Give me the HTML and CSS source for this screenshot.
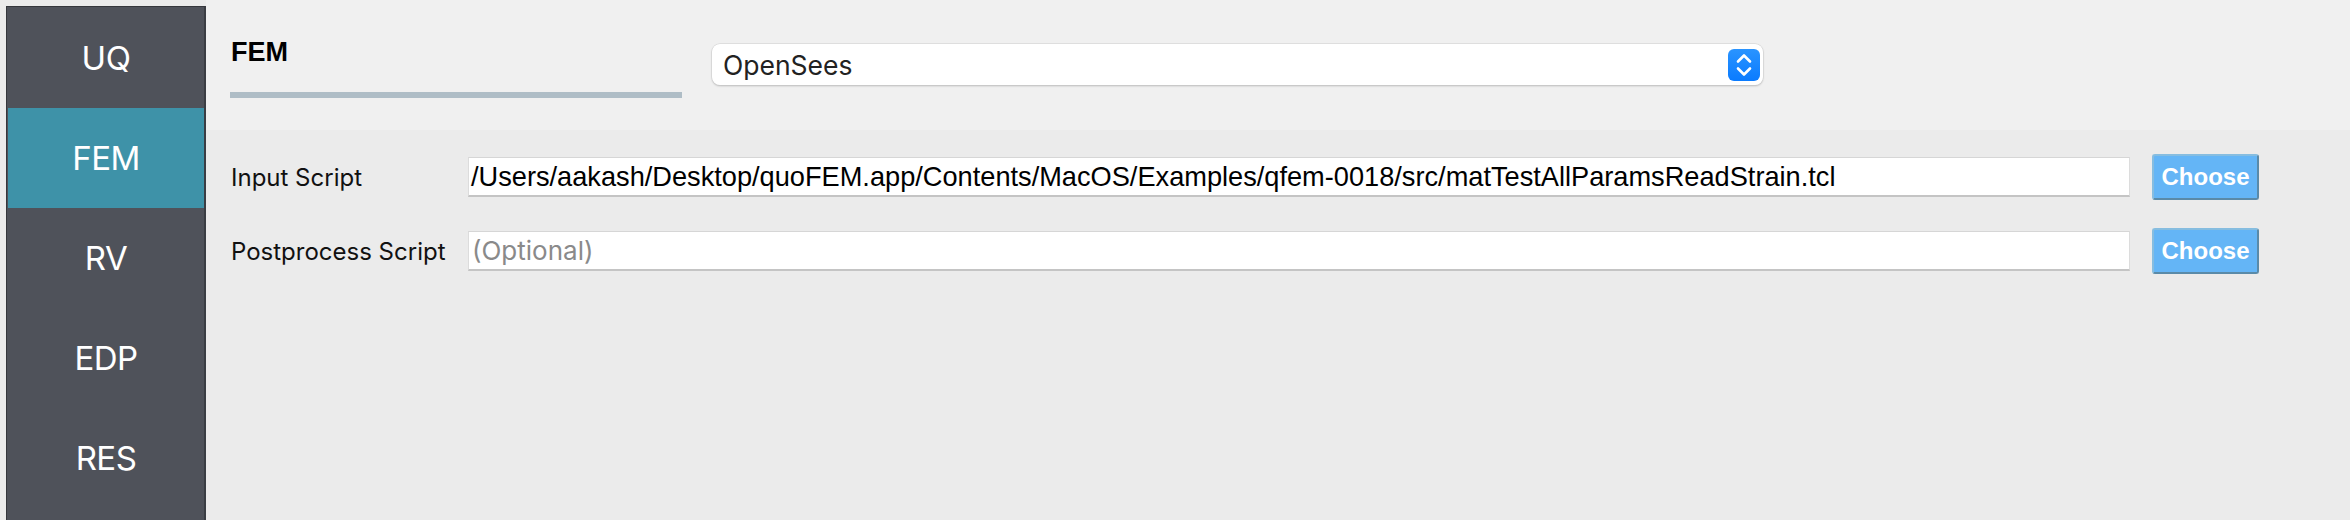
FILE: index.html
```html
<!DOCTYPE html>
<html>
<head>
<meta charset="utf-8">
<link rel="stylesheet" href="styles.css">
</head>
<body>
<div class="app">
  <nav class="sidebar">
    <div class="nav-item">UQ</div>
    <div class="nav-item active">FEM</div>
    <div class="nav-item">RV</div>
    <div class="nav-item">EDP</div>
    <div class="nav-item">RES</div>
  </nav>
  <main class="main">
    <header class="header">
      <div class="title-block">
        <div class="title">FEM</div>
        <div class="title-bar"></div>
      </div>
      <div class="select">
        <span class="select-text">OpenSees</span>
        <span class="stepper">
          <svg width="32" height="32" viewBox="0 0 32 32">
            <path d="M10 12.5 L16 6.5 L22 12.5" fill="none" stroke="#fff" stroke-width="2.6" stroke-linecap="round" stroke-linejoin="round"/>
            <path d="M10 19.5 L16 25.5 L22 19.5" fill="none" stroke="#fff" stroke-width="2.6" stroke-linecap="round" stroke-linejoin="round"/>
          </svg>
        </span>
      </div>
    </header>
    <section class="form">
      <div class="row">
        <label class="label">Input Script</label>
        <div class="field path">/Users/aakash/Desktop/quoFEM.app/Contents/MacOS/Examples/qfem-0018/src/matTestAllParamsReadStrain.tcl</div>
        <button class="btn">Choose</button>
      </div>
      <div class="row">
        <label class="label">Postprocess Script</label>
        <div class="field placeholder">(Optional)</div>
        <button class="btn">Choose</button>
      </div>
    </section>
  </main>
</div>
</body>
</html>
```

FILE: styles.css
```css
html, body {
  margin: 0;
  padding: 0;
}
body {
  width: 2350px;
  height: 520px;
  overflow: hidden;
  background: #ebebeb;
  font-family: "Inter", "Liberation Sans", sans-serif;
}
.app {
  display: flex;
  height: 520px;
}
.sidebar {
  width: 200px;
  box-sizing: border-box;
  margin: 6px 0 0 6px;
  border-left: 1px solid #35373c;
  border-top: 1px solid #35373c;
  border-right: 2px solid #3a3d43;
  padding: 1px 0 0 1px;
  background: #4f525a;
  display: flex;
  flex-direction: column;
  flex-shrink: 0;
}
.nav-item {
  height: 100px;
  display: flex;
  align-items: center;
  justify-content: center;
  color: #ffffff;
  font-size: 33px;
  letter-spacing: -0.5px;
}
.nav-item.active {
  background: #3e92a8;
}
.main {
  flex: 1;
  display: flex;
  flex-direction: column;
}
.header {
  height: 130px;
  background: #f0f0f0;
  display: flex;
  align-items: flex-start;
  padding-left: 24px;
  box-sizing: border-box;
}
.title-block {
  width: 452px;
  padding-top: 36px;
}
.title {
  font-family: "Liberation Sans", sans-serif;
  font-weight: bold;
  font-size: 27px;
  line-height: 32px;
  color: #000;
  padding-left: 1px;
}
.title-bar {
  margin-top: 24px;
  height: 6px;
  background: #afbdc6;
}
.select {
  margin-left: 30px;
  margin-top: 44px;
  width: 1051px;
  height: 41px;
  box-sizing: border-box;
  background: #ffffff;
  border-radius: 8px;
  box-shadow: 0 0 0 0.5px #d0d0d0, 0 1px 2px rgba(0,0,0,0.25);
  display: flex;
  align-items: center;
  justify-content: space-between;
  padding: 0 3px 0 11px;
}
.select-text {
  font-size: 26.5px;
  color: #222;
}
.stepper {
  width: 32px;
  height: 32px;
  border-radius: 6px;
  background: linear-gradient(#2a94ff, #0a7bff);
  display: flex;
}
.form {
  display: flex;
  flex-direction: column;
  gap: 28px;
  padding: 24px 91px 0 25px;
}
.row {
  display: flex;
  align-items: center;
  height: 46px;
}
.label {
  width: 237px;
  flex-shrink: 0;
  font-size: 24px;
  color: #111;
}
.field {
  flex: 1;
  height: 40px;
  box-sizing: border-box;
  background: #fff;
  border-top: 1px solid #d6d6d6;
  border-left: 1px solid #dcdcdc;
  border-right: 1px solid #dcdcdc;
  border-bottom: 2px solid #c4c4c4;
  padding: 0 2px;
  display: flex;
  align-items: center;
  font-family: "Liberation Sans", sans-serif;
  font-size: 27.2px;
  color: #000;
  white-space: nowrap;
  overflow: hidden;
}
.field.placeholder {
  font-family: "Inter", sans-serif;
  font-size: 26px;
  color: #8a8a8a;
  padding-left: 3px;
}
.btn {
  margin-left: 22px;
  width: 107px;
  height: 46px;
  box-sizing: border-box;
  background: #64b5f6;
  border: 2px solid #86bde0;
  border-right-color: #5a8aa8;
  border-bottom-color: #5a8aa8;
  border-radius: 3px;
  color: #ffffff;
  font-family: "Liberation Sans", sans-serif;
  font-weight: bold;
  font-size: 24px;
  padding: 0;
}
```
